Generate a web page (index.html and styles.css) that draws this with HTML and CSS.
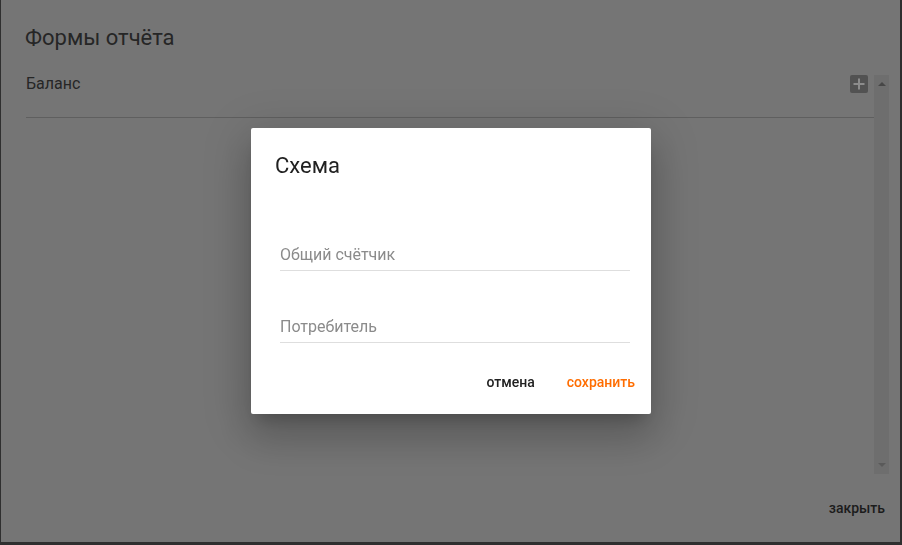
FILE: index.html
```html
<!DOCTYPE html>
<html lang="ru">
<head>
<meta charset="utf-8">
<title>Формы отчёта</title>
<link rel="stylesheet" href="styles.css">
</head>
<body>
<div class="outer">
  <h1 class="outer-title">Формы отчёта</h1>
  <div class="list-wrap">
    <div class="list">
      <div class="row">
        <span class="row-name">Баланс</span>
        <span class="add-btn">
          <svg width="18" height="18" viewBox="0 0 18 18"><rect x="0" y="0" width="18" height="18" rx="2" fill="#525252"/><path d="M9 3.5v11M3.5 9h11" stroke="#8c8c8c" stroke-width="2"/></svg>
        </span>
      </div>
    </div>
    <div class="scrollbar">
      <span class="arrow up"></span>
      <span class="arrow down"></span>
    </div>
  </div>
  <div class="outer-actions">
    <span class="btn dark">закрыть</span>
  </div>
</div>

<div class="backdrop">
  <div class="modal">
    <h2 class="modal-title">Схема</h2>
    <div class="field"><span class="placeholder">Общий счётчик</span></div>
    <div class="field"><span class="placeholder">Потребитель</span></div>
    <div class="modal-actions">
      <span class="btn black">отмена</span>
      <span class="btn orange">сохранить</span>
    </div>
  </div>
</div>
</body>
</html>
```
FILE: styles.css
```css
html, body {
  margin: 0;
  padding: 0;
  width: 902px;
  height: 545px;
  overflow: hidden;
}
body {
  background: #2f2f2f;
  font-family: Roboto, "Noto Sans", "Liberation Sans", sans-serif;
}
.outer {
  margin-left: 1px;
  width: 899px;
  height: 542px;
  background: #757575;
  display: flex;
  flex-direction: column;
  box-sizing: border-box;
}
.outer-title {
  margin: 22px 0 0 24px;
  font-size: 22px;
  line-height: 32px;
  font-weight: 400;
  color: #262626;
}
.list-wrap {
  margin: 21px 0 0 24px;
  width: 864px;
  height: 399px;
  display: flex;
}
.list {
  flex: 1;
}
.row {
  height: 42px;
  border-bottom: 1px solid #5f5f5f;
  display: flex;
  justify-content: space-between;
  align-items: flex-start;
  margin-left: 1px;
}
.row-name {
  font-size: 16px;
  line-height: 20px;
  color: #262626;
  margin-top: -1px;
}
.add-btn {
  display: block;
  width: 18px;
  height: 18px;
  margin-right: 6px;
}
.add-btn svg { display: block; }
.scrollbar {
  width: 15px;
  background: #6e6e6e;
  display: flex;
  flex-direction: column;
  justify-content: space-between;
  align-items: center;
  padding: 7px 0;
  box-sizing: border-box;
}
.arrow {
  width: 0;
  height: 0;
  border-left: 4px solid transparent;
  border-right: 4px solid transparent;
}
.arrow.up { border-bottom: 4px solid #474747; }
.arrow.down { border-top: 4px solid #5a5a5a; }
.outer-actions {
  flex: 1;
  display: flex;
  justify-content: flex-end;
  align-items: center;
  padding: 0 7px 0 0;
  margin-top: 0;
}
.btn {
  font-size: 14px;
  font-weight: 500;
  line-height: 36px;
  padding: 0 8px;
}
.btn.dark { color: #1c1c1c; }
.backdrop {
  position: fixed;
  inset: 0;
  display: flex;
  justify-content: center;
  align-items: flex-start;
  padding-top: 128px;
}
.modal {
  width: 400px;
  height: 286px;
  background: #fff;
  border-radius: 2px;
  box-shadow: 0 11px 15px -7px rgba(0,0,0,.2), 0 24px 38px 3px rgba(0,0,0,.14), 0 9px 46px 8px rgba(0,0,0,.12);
  display: flex;
  flex-direction: column;
  box-sizing: border-box;
}
.modal-title {
  margin: 24px 0 0 24px;
  font-size: 22px;
  line-height: 28px;
  font-weight: 400;
  color: #212121;
}
.field {
  margin-left: 29px;
  width: 350px;
  height: 27px;
  border-bottom: 1px solid #dedede;
  box-sizing: border-box;
  display: flex;
  align-items: flex-start;
}
.field:first-of-type { margin-top: 64px; }
.field + .field { margin-top: 45px; }
.placeholder {
  font-size: 16px;
  line-height: 20px;
  color: #8b8b8b;
  padding-top: 1px;
}
.modal-actions {
  margin-top: 21px;
  display: flex;
  justify-content: flex-end;
}
.modal-actions .btn {
  padding: 0 16px;
}
.btn.black { color: #212121; }
.btn.orange { color: #ff6d00; }
```
